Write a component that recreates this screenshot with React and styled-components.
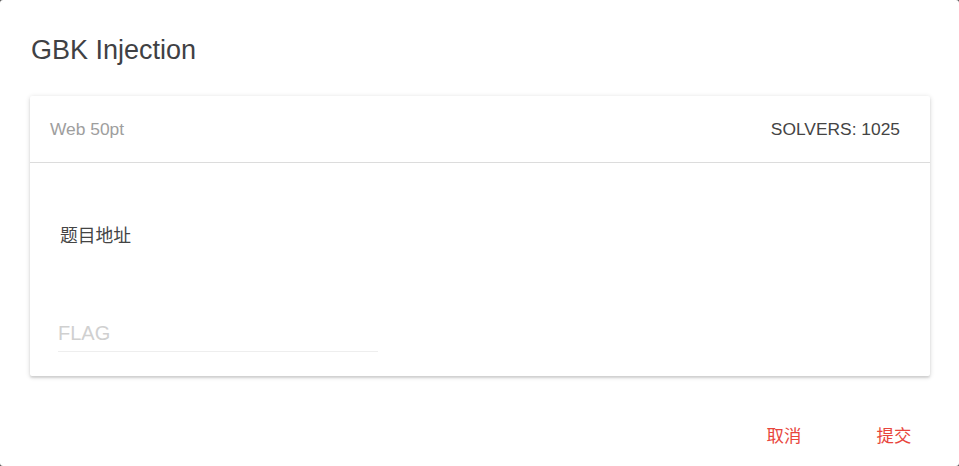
import styled, { createGlobalStyle } from 'styled-components';

const GlobalStyle = createGlobalStyle`
  html, body {
    margin: 0;
    padding: 0;
    background: #555;
  }
  body {
    font-family: "Liberation Sans", "Noto Sans CJK SC", Arial, sans-serif;
  }
`;

const Dialog = styled.div`
  width: 959px;
  height: 466px;
  box-sizing: border-box;
  background: #fff;
  border-radius: 3px;
  padding: 30px 29px 0 30px;
  display: flex;
  flex-direction: column;
`;

const Title = styled.h2`
  margin: 0 0 0 1px;
  font-size: 27px;
  line-height: 40px;
  font-weight: 400;
  color: #3f4144;
`;

const Card = styled.div`
  margin-top: 26px;
  height: 280px;
  background: #fff;
  box-shadow: 0 1px 5px rgba(0, 0, 0, 0.16), 0 2px 2px rgba(0, 0, 0, 0.1);
  border-radius: 2px;
  display: flex;
  flex-direction: column;
`;

const CardHeader = styled.div`
  height: 66px;
  border-bottom: 1px solid #dcdcdc;
  display: flex;
  align-items: center;
  justify-content: space-between;
  padding: 0 30px 0 20px;
  font-size: 17.4px;
`;

const Category = styled.span`
  color: #9e9e9e;
`;

const Solvers = styled.span`
  color: #444;
`;

const CardBody = styled.div`
  padding: 61px 30px 0 30px;
  display: flex;
  flex-direction: column;
`;

const Desc = styled.div`
  font-size: 17.8px;
  line-height: 24px;
  color: #444;
`;

const FlagInput = styled.input`
  margin-top: 72px;
  margin-left: -2px;
  width: 320px;
  height: 32px;
  box-sizing: border-box;
  border: none;
  border-bottom: 1px solid #eeeeee;
  outline: none;
  padding: 0 0 5px 0;
  font-family: "Liberation Sans", Arial, sans-serif;
  font-size: 20px;
  color: #333;
  background: transparent;

  &::placeholder {
    color: #d0d0d0;
  }
`;

const Footer = styled.div`
  margin-top: 40px;
  display: flex;
  justify-content: flex-end;
  gap: 38px;
`;

const TextButton = styled.button`
  min-width: 72px;
  height: 36px;
  border: none;
  background: transparent;
  font-family: "Liberation Sans", "Noto Sans CJK SC", sans-serif;
  font-size: 17.4px;
  color: #e8453c;
  cursor: pointer;
  padding: 0;
`;

export default function App() {
  return (
    <>
      <GlobalStyle />
      <Dialog>
        <Title>GBK Injection</Title>
        <Card>
          <CardHeader>
            <Category>Web 50pt</Category>
            <Solvers>SOLVERS: 1025</Solvers>
          </CardHeader>
          <CardBody>
            <Desc>题目地址</Desc>
            <FlagInput placeholder="FLAG" />
          </CardBody>
        </Card>
        <Footer>
          <TextButton>取消</TextButton>
          <TextButton>提交</TextButton>
        </Footer>
      </Dialog>
    </>
  );
}
